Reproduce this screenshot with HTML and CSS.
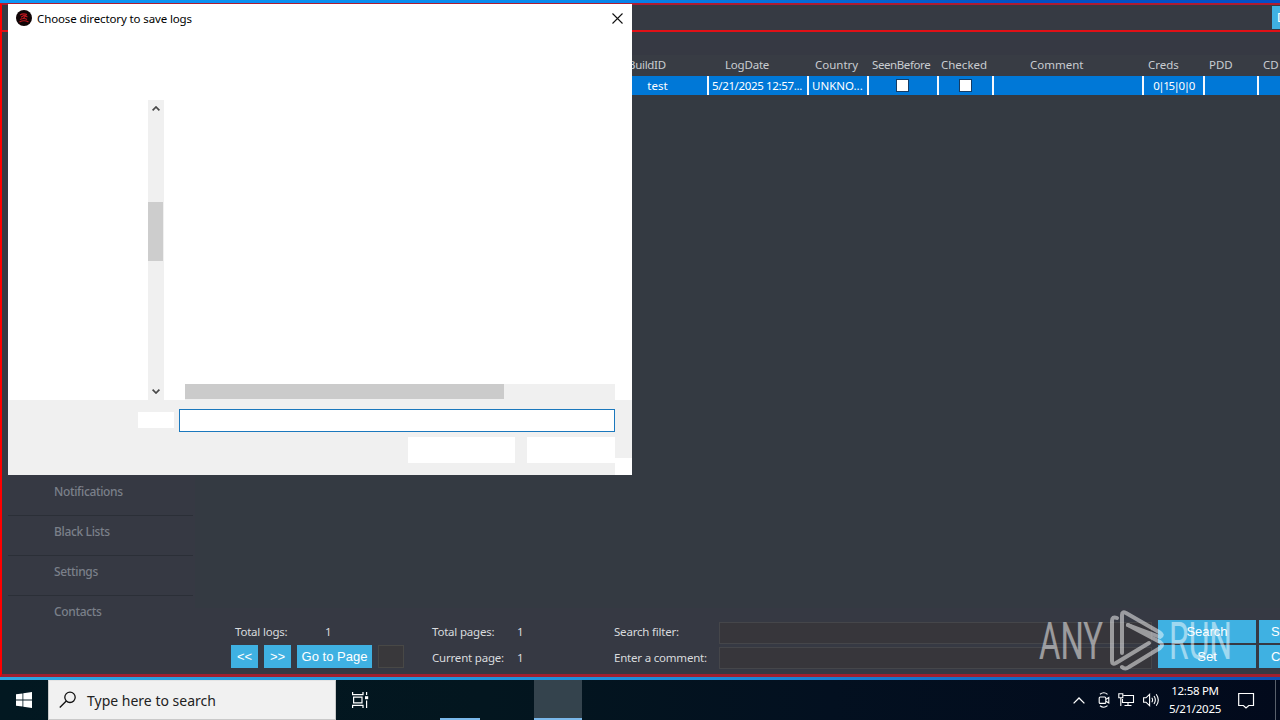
FILE: index.html
```html
<!DOCTYPE html>
<html lang="en">
<head>
<meta charset="utf-8">
<title>Log manager</title>
<link rel="stylesheet" href="styles.css">
</head>
<body>
<div class="desktop">
  <main class="app">
    <header class="titlebar"><button class="btn title-btn">D</button></header>
    <div class="workspace">
      <nav class="sidebar">
        <a class="nav-item">Notifications</a>
        <a class="nav-item">Black Lists</a>
        <a class="nav-item">Settings</a>
        <a class="nav-item last">Contacts</a>
      </nav>
      <section class="content">
        <div class="grid head">
          <span></span><span class="h-build">BuildID</span><span class="h-date">LogDate</span><span class="h-country">Country</span><span class="h-seen">SeenBefore</span><span class="h-checked">Checked</span><span class="h-comment">Comment</span><span class="h-creds">Creds</span><span class="h-creds">PDD</span><span class="h-creds">CD</span>
        </div>
        <div class="grid row">
          <span></span><span class="center">test</span><span class="date">5/21/2025 12:57...</span><span class="country">UNKNO...</span><span class="center seen"><i class="check"></i></span><span class="center"><i class="check"></i></span><span></span><span class="center creds">0|15|0|0</span><span></span><span></span>
        </div>
        <div class="empty"></div>
        <footer class="footer">
          <div class="pager">
            <div class="line"><span class="w-logs">Total logs:</span><span>1</span></div>
            <div class="buttons"><button class="btn b-nav">&lt;&lt;</button><button class="btn b-nav">&gt;&gt;</button><button class="btn b-go">Go to Page</button><span class="page-input"></span></div>
          </div>
          <div class="pages">
            <div class="line"><span class="w-pages">Total pages:</span><span>1</span></div>
            <div class="line"><span class="w-pages">Current page:</span><span>1</span></div>
          </div>
          <div class="labels">
            <div class="line">Search filter:</div>
            <div class="line">Enter a comment:</div>
          </div>
          <div class="fields"><span class="field"></span><span class="field"></span></div>
          <div class="actions">
            <button class="btn">Search</button><button class="btn cut">S</button>
            <button class="btn">Set</button><button class="btn cut">C</button>
          </div>
        </footer>
      </section>
    </div>
  </main>

  <footer class="taskbar">
    <div class="start"><svg width="16" height="16" viewBox="0 0 16 16" fill="#fff"><path d="M0 2.3 6.5 1.4V7.6H0zM7.3 1.3 16 0V7.6H7.3zM0 8.4H6.5V14.6L0 13.7zM7.3 8.4H16V16L7.3 14.7z"/></svg></div>
    <div class="search">
      <svg width="18" height="18" viewBox="0 0 18 18" fill="none" stroke="#111" stroke-width="1.3"><circle cx="11" cy="6.3" r="5.2"/><path d="M7.3 10 .8 16.5"/></svg>
      <span>Type here to search</span>
    </div>
    <div class="taskview"><svg width="17" height="16" viewBox="0 0 17 16" fill="none" stroke="#fff" stroke-width="1.2"><path d="M.6 0V2.6H11V0M.6 16V13.4H11V16M1.6 5.2H10V10.8H1.6zM14.6 0V3M14.6 8.5V16"/><path d="M13 4.2h3.2v3H13z" fill="#fff" stroke="none"/></svg></div>
    <div class="task running"></div>
    <div class="task active"></div>
    <div class="tray">
      <svg class="i-up" width="12" height="7" viewBox="0 0 12 7" fill="none" stroke="#fff" stroke-width="1.3"><path d="M.6 6.4 6 1 11.4 6.4"/></svg>
      <svg class="i-cam" width="12" height="16" viewBox="0 0 12 16" fill="none" stroke="#fff" stroke-width="1.1"><rect x="1.2" y="5" width="6.6" height="6.4" rx="1"/><path d="M8 7.3 10.8 5.5V11L8 9.2M2 2.3Q5.8-.8 9.5 2.3M2 13.7Q5.8 16.8 9.5 13.7"/></svg>
      <svg class="i-net" width="17" height="14" viewBox="0 0 17 14" fill="none" stroke="#fff" stroke-width="1.1"><path d="M5.5 2.5H15.5V9.5H4.5V6M10 10V12.5M6.5 12.5H13.5M.8.8H4.8V4.8H.8zM2.8 5V13"/></svg>
      <svg class="i-vol" width="17" height="14" viewBox="0 0 17 14" fill="none" stroke="#fff" stroke-width="1.1"><path d="M.6 4.8H3L6.6 1.4V12.6L3 9.2H.6zM8.8 4.8Q10.4 7 8.8 9.2M11 3Q13.7 7 11 11M13.2 1.2Q17.4 7 13.2 12.8"/></svg>
      <div class="clock"><span>12:58 PM</span><span>5/21/2025</span></div>
      <svg class="i-note" width="17" height="17" viewBox="0 0 17 17" fill="none" stroke="#fff" stroke-width="1.2"><path d="M.7 1.5H15.5V13.5H10.8L8 16 5.4 13.5H.7z"/></svg>
      <i class="show-desktop"></i>
    </div>
  </footer>

  <section class="dialog">
    <header class="dialog-title">
      <svg width="16" height="16" viewBox="0 0 16 16"><circle cx="8" cy="8" r="8" fill="#100506"/><path d="M4 5Q7 3 11 4.5M5 7.2 8 5.5 11.5 7M10.5 4.5 7 9M4 9.5Q8 7.5 11 9.5M3.5 12Q8 9.5 12.5 12" fill="none" stroke="#c11720" stroke-width="1.2"/></svg>
      <span>Choose directory to save logs</span>
      <svg class="close" width="11" height="11" viewBox="0 0 11 11" stroke="#111" stroke-width="1.1"><path d="M.5.5 10.5 10.5M10.5.5.5 10.5"/></svg>
    </header>
    <div class="dialog-body">
      <div class="vscroll">
        <svg width="8" height="5" viewBox="0 0 8 5" fill="none" stroke="#484848" stroke-width="1.7"><path d="M.6 4.4 4 1 7.4 4.4"/></svg>
        <i class="vthumb"></i>
        <svg width="8" height="5" viewBox="0 0 8 5" fill="none" stroke="#484848" stroke-width="1.7"><path d="M.6.6 4 4 7.4.6"/></svg>
      </div>
      <div class="hscroll"><i></i></div>
    </div>
    <div class="dialog-foot">
      <div class="folder"><span class="folder-label"></span><span class="folder-input"></span></div>
      <div class="dialog-buttons"><span class="ok"></span><span class="cancel"></span></div>
      <i class="corner"></i>
    </div>
  </section>

  <svg class="watermark" width="196" height="64" viewBox="0 0 196 64">
    <g fill="#fff" font-family="Roboto" font-weight="400" font-size="52">
      <text x="1" y="50" textLength="64" lengthAdjust="spacingAndGlyphs">ANY</text>
      <text x="131" y="50" textLength="63" lengthAdjust="spacingAndGlyphs">RUN</text>
    </g>
    <g fill="none" stroke="#fff" stroke-width="4" stroke-linejoin="round" stroke-linecap="round">
      <path d="M79 9Q74 7 74 12V52Q74 56 78 54L111 34"/>
      <path d="M84 44V6Q84 2 88 4L121 23Q126 26 122 28L90 16"/>
      <path d="M84 58Q87 61 91 58L122 39Q126 36 122 33L90 16"/>
    </g>
  </svg>
</div>
</body>
</html>
```

FILE: styles.css
```css
* { box-sizing: border-box; }
body { margin: 0; font-family: "Noto Sans", "Open Sans", sans-serif; overflow: hidden; }
svg { display: block; flex: none; }
.desktop { position: relative; width: 1280px; height: 720px; overflow: hidden; display: flex; flex-direction: column; background: #1583d8; }

.app { height: 680px; display: flex; flex-direction: column; padding-top: 3px; background: linear-gradient(90deg, #0c96f4 0, #0789ed 45%, #0350c4 80%, #0450c8 100%); border-bottom: 3px solid; border-image: linear-gradient(90deg, #2ea6e0, #1d8cd8 55%, #0d50b4) 1; border-top: 0; border-left: 0; border-right: 0; }
.titlebar { height: 29px; flex: none; display: flex; justify-content: flex-end; align-items: flex-start; background: #363a43; border-top: 2px solid #b01c30; border-bottom: 2px solid #e01016; border-left: 2px solid #f00; padding-top: 1px; }
.btn { border: 0; margin: 0; padding: 0; background: #3fb1e2; color: #fff; font: 13px "Liberation Sans", Arial, sans-serif; overflow: hidden; white-space: nowrap; }
.title-btn { width: 8px; height: 23px; text-align: left; padding-left: 5px; }
.workspace { flex: 1; min-height: 0; display: flex; background: #363943; border-left: 2px solid #f00; border-bottom: 3px solid #a0202f; }
.sidebar { width: 193px; flex: none; padding: 444px 2px 0 6px; }
.nav-item { display: block; height: 40px; padding-left: 46px; font-size: 12px; font-weight: 500; line-height: 32px; letter-spacing: -0.35px; color: #7b808a; border-bottom: 1px solid #2b2f37; }
.nav-item.last { border: 0; }
.content { width: 1085px; flex: none; display: flex; flex-direction: column; padding-top: 23px; overflow: hidden; }
.grid { display: grid; grid-template-columns: 413px 101px 100px 60px 70px 55px 150px 61px 54px 70px; flex: none; white-space: nowrap; width: 1134px; }
.head { height: 21px; color: #c9ccd1; line-height: 20px; background: #383c44; font-size: 11.5px; }
.h-build { padding-left: 20px; letter-spacing: -0.3px; }
.h-date { padding-left: 16px; letter-spacing: -0.2px; }
.h-country { padding-left: 6px; }
.h-seen { padding-left: 3px; letter-spacing: -0.4px; }
.h-checked { padding-left: 2px; }
.h-comment { padding-left: 36px; }
.h-creds { padding-left: 4px; }
.row { height: 19px; background: #0078d7; color: #fff; line-height: 19px; font-size: 11.5px; }
.row > span { border-right: 2px solid #f3f7fb; overflow: hidden; }
.row .center { display: flex; justify-content: center; align-items: center; }
.row .seen { padding-right: 2px; }
.row .creds { letter-spacing: -1.4px; }
.date, .country { padding-left: 3px; }
.date { letter-spacing: -0.35px; }
.check { width: 13px; height: 13px; background: #fff; border: 1px solid #163c63; }
.empty { flex: 1; background: #343a42; }
.footer { height: 66px; flex: none; display: flex; color: #d9dbde; font-size: 11.5px; white-space: nowrap; letter-spacing: -0.2px; }
.footer > div { flex: none; }
.line { height: 26px; line-height: 26px; display: flex; }
.pager { width: 237px; padding: 11px 0 0 36px; }
.pager .line { padding-left: 4px; }
.w-logs { width: 90px; }
.w-pages { width: 85px; }
.buttons { display: flex; gap: 6px; }
.b-nav { width: 27px; height: 23px; }
.b-go { width: 75px; height: 23px; }
.page-input { width: 26px; height: 23px; border: 1px solid #484846; background: #39383b; }
.pages { width: 182px; padding-top: 11px; }
.labels { width: 105px; padding-top: 11px; }
.fields { width: 433px; padding-top: 14px; display: grid; gap: 3px; align-content: start; }
.field { height: 22px; background: #37363b; border: 1px solid #45464a; }
.actions { margin-left: 6px; padding-top: 12px; display: grid; grid-template-columns: 98px 30px; grid-template-rows: 23px 23px; gap: 2px 3px; }
.cut { text-align: left; padding-left: 12px; }

.taskbar { height: 40px; flex: none; display: flex; background: linear-gradient(90deg, #021821 0, #03161f 38%, #031020 65%, #020a1c 100%); color: #fff; }
.start { width: 48px; display: grid; place-items: center; }
.search { width: 288px; background: #f1f1f1; border: 1px solid #c9c9c9; border-top-color: #e5e5e5; display: flex; align-items: center; padding-left: 10px; gap: 10px; color: #222; font-size: 14px; }
.taskview { width: 48px; display: grid; place-items: center; }
.task.running { width: 40px; margin-left: 56px; border-bottom: 2px solid #7ab8ea; }
.task.active { width: 48px; margin-left: 54px; background: #34434d; border-bottom: 2px solid #7ab8ea; }
.tray { flex: 1; display: flex; align-items: center; padding-left: 491px; }
.i-cam { margin-left: 13px; }
.i-net { margin-left: 8px; }
.i-vol { margin-left: 8px; }
.clock { width: 54px; margin-left: 8px; display: flex; flex-direction: column; align-items: center; font-size: 11.5px; line-height: 18px; white-space: nowrap; letter-spacing: -0.3px; }
.i-note { margin-left: 16px; }
.show-desktop { width: 1px; height: 40px; margin-left: 20px; background: #59606b; }

.dialog { position: absolute; left: 8px; top: 4px; width: 624px; height: 471px; background: #fff; display: flex; flex-direction: column; }
.dialog-title { height: 28px; display: flex; align-items: center; padding: 0 9px 0 8px; gap: 5px; font-size: 11.5px; letter-spacing: -0.12px; color: #000; }
.close { margin-left: auto; }
.dialog-body { height: 368px; display: flex; align-items: flex-end; padding-left: 140px; }
.vscroll { width: 16px; height: 300px; background: #f0f0f0; display: flex; flex-direction: column; align-items: center; justify-content: space-between; padding: 6px 1px 6px 0; }
.vthumb { width: 15px; height: 59px; background: #cdcdcd; margin-top: -37px; }
.hscroll { width: 430px; height: 16px; margin-left: 21px; background: #f0f0f0; }
.hscroll i { display: block; width: 319px; height: 15px; background: #cbcbcb; }
.dialog-foot { position: relative; flex: 1; background: #f0f0f0; padding: 9px 17px 0 130px; }
.folder { display: flex; align-items: center; gap: 5px; }
.folder-label { width: 36px; height: 16px; margin-bottom: 1px; background: #fff; }
.folder-input { width: 436px; height: 23px; background: #fff; border: 1px solid #1b78bd; }
.dialog-buttons { display: flex; justify-content: flex-end; gap: 12px; margin-top: 5px; }
.ok { width: 107px; height: 26px; background: #fff; }
.cancel { width: 88px; height: 26px; background: #fff; }
.corner { position: absolute; right: 0; bottom: 0; width: 17px; height: 17px; background: #fff; }
.watermark { position: absolute; left: 1038px; top: 609px; opacity: .5; }
```
